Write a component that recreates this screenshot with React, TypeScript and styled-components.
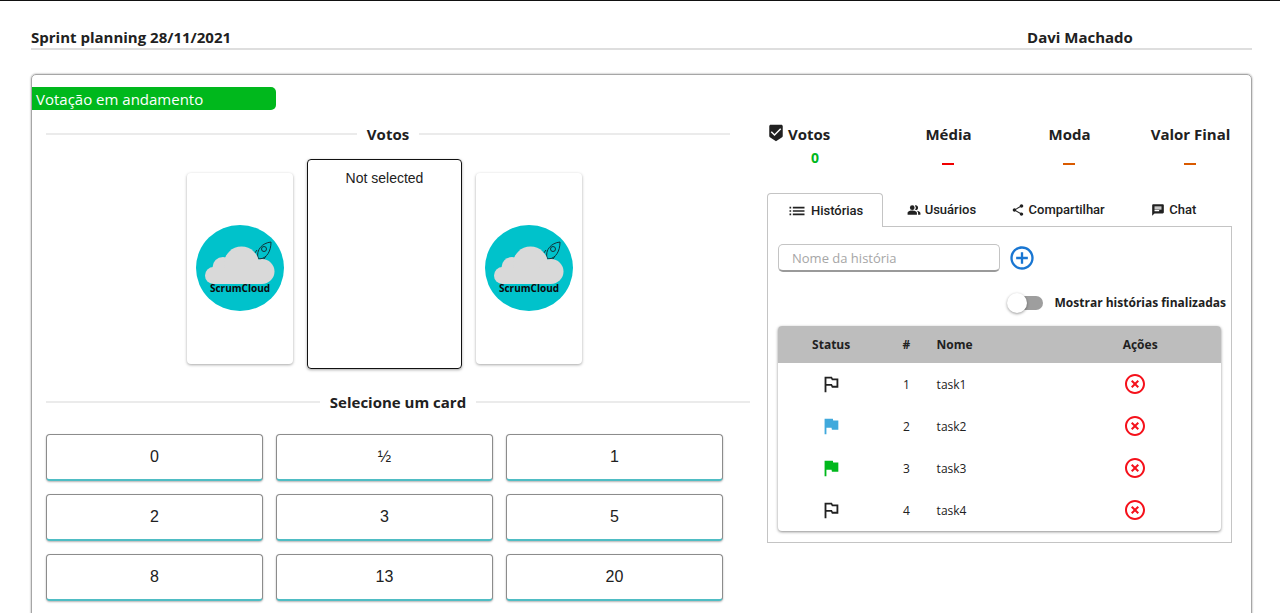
import React, { useState } from "react";
import styled, { createGlobalStyle } from "styled-components";
import {
  MdAddCircleOutline,
  MdBeenhere,
  MdChat,
  MdFlag,
  MdHighlightOff,
  MdList,
  MdOutlinedFlag,
  MdPeopleAlt,
  MdShare,
} from "react-icons/md";

const ui = `"Open Sans", "Noto Sans", sans-serif`;
const plain = `"Liberation Sans", Arial, sans-serif`;
const ink = "#212121";

const GlobalStyle = createGlobalStyle`
  *, *::before, *::after { box-sizing: border-box; }
  body { margin: 0; background: #fff; color: ${ink}; font-family: ${ui}; }
  button, input { font: inherit; color: inherit; }
`;

const Page = styled.div`
  height: 100vh;
  overflow-y: auto;
  scrollbar-width: none;
  border-top: 1px solid #111;
  padding: 25px 28px 0 31px;
`;

const Header = styled.header`
  display: grid;
  grid-template-columns: 1fr 344px;
  height: 24px;
  border-bottom: 2px solid #dedede;
  font-size: 15px;
  line-height: 22px;
`;

const RoomTitle = styled.h1`
  margin: 0;
  font-size: 15px;
  font-weight: 700;
`;

const UserName = styled.strong`
  text-align: center;
`;

const Board = styled.main`
  display: grid;
  grid-template-columns: minmax(0, 1fr) 484px;
  margin-top: 24px;
  padding: 12px 0 40px;
  border: 1px solid #a6a6a6;
  border-radius: 5px;
  box-shadow: 0 0 2px rgba(0, 0, 0, 0.45);
`;

const StatusBar = styled.div`
  grid-column: 1 / -1;
  width: 20%;
  height: 23px;
  padding-left: 4px;
  background: #00b81c;
  border-radius: 0 5px 5px 0;
  color: #fff;
  font-size: 15px;
  line-height: 25px;
`;

const VotingArea = styled.section`
  padding: 11px 0 0 14px;
`;

const SectionTitle = styled.h2<{ $inset: number }>`
  display: flex;
  align-items: center;
  gap: 10px;
  margin: 0 ${(p) => p.$inset}px 0 0;
  font-size: 15px;
  font-weight: 700;
  line-height: 26px;
  &::before,
  &::after {
    content: "";
    flex: 1;
    height: 2px;
    background: #ebebeb;
  }
`;

const VoteCards = styled.div`
  display: flex;
  align-items: center;
  justify-content: center;
  gap: 14px;
  margin: 12px 44px 20px 0;
`;

const LogoCard = styled.div`
  display: grid;
  place-items: center;
  width: 106px;
  height: 191px;
  margin-top: 8px;
  border-radius: 4px;
  background: #fff;
  box-shadow: 0 1px 3px rgba(0, 0, 0, 0.35);
`;

const SelectedCard = styled.div`
  width: 155px;
  height: 210px;
  padding-top: 10px;
  border: 1px solid #111;
  border-radius: 4px;
  box-shadow: 0 1px 3px rgba(0, 0, 0, 0.35);
  font-family: ${plain};
  font-size: 14px;
  line-height: 16px;
  text-align: center;
`;

const Deck = styled.div`
  display: grid;
  grid-template-columns: repeat(3, 1fr);
  gap: 13px;
  margin: 19px 44px 0 0;
`;

const DeckButton = styled.button`
  height: 47px;
  border: 1px solid #8c8c8c;
  border-bottom: 2px solid #4fbdc4;
  border-radius: 4px;
  background: #fff;
  box-shadow: 0 1px 2px rgba(0, 0, 0, 0.3);
  font-family: ${plain};
  font-size: 16px;
  cursor: pointer;
`;

const Side = styled.aside`
  padding-top: 11px;
`;

const Stats = styled.dl`
  display: grid;
  grid-template-columns: repeat(4, 1fr);
  margin: 0;
  font-size: 15px;
  font-weight: 700;
  line-height: 26px;
  text-align: center;
`;

const Stat = styled.div<{ $first?: boolean }>`
  dt {
    display: flex;
    align-items: center;
    justify-content: ${(p) => (p.$first ? "flex-start" : "center")};
    gap: 3px;
  }
  dt svg {
    margin-bottom: 2px;
  }
  dd {
    margin: 0;
    padding-right: ${(p) => (p.$first ? 25 : 2)}px;
  }
`;

const Value = styled.dd<{ $color: string }>`
  color: ${(p) => p.$color};
  font-size: 14px;
  line-height: 22px;
`;

const EmptyValue = styled.span`
  display: inline-block;
  width: 12px;
  height: 2px;
  background: currentColor;
  vertical-align: -2px;
`;

const Tabs = styled.div`
  display: grid;
  grid-template-columns: repeat(4, 1fr);
  margin: 24px 19px 0 0;
`;

const Tab = styled.button<{ $active: boolean }>`
  display: flex;
  align-items: center;
  justify-content: center;
  gap: 4px;
  height: 34px;
  padding: 0;
  border: 0 solid #c4c4c4;
  border-width: ${(p) => (p.$active ? "1px 1px 0" : "0 0 1px")};
  border-radius: ${(p) => (p.$active ? "4px 4px 0 0" : "0")};
  background: #fff;
  font-family: Roboto, sans-serif;
  font-size: 13px;
  font-weight: 500;
  cursor: pointer;
`;

const TabPanel = styled.div`
  margin-right: 19px;
  padding: 17px 10px 11px;
  border: 1px solid #c4c4c4;
  border-top: 0;
`;

const AddStory = styled.form`
  display: flex;
  align-items: center;
  gap: 8px;
`;

const StoryInput = styled.input`
  width: 222px;
  height: 28px;
  padding: 0 13px;
  border: 1px solid #c4c4c4;
  border-bottom: 2px solid #9a9a9a;
  border-radius: 5px;
  background: #fff;
  font-size: 13px;
  &::placeholder {
    color: #a6a6a6;
    opacity: 1;
  }
`;

const IconButton = styled.button<{ $color: string }>`
  display: inline-flex;
  padding: 0;
  border: 0;
  background: none;
  color: ${(p) => p.$color};
  vertical-align: middle;
  cursor: pointer;
`;

const ToggleRow = styled.label`
  display: flex;
  align-items: center;
  justify-content: flex-end;
  gap: 12px;
  margin: 20px -5px 12px 0;
  font-size: 12px;
  font-weight: 700;
  line-height: 22px;
`;

const Switch = styled.input`
  appearance: none;
  display: flex;
  align-items: center;
  width: 34px;
  height: 14px;
  margin: 0;
  border-radius: 7px;
  background: #9e9e9e;
  &::before {
    content: "";
    width: 20px;
    height: 20px;
    flex: none;
    margin-left: -2px;
    border-radius: 50%;
    background: #fff;
    box-shadow: 0 1px 3px rgba(0, 0, 0, 0.4);
  }
  &:checked {
    background: #8ab8ea;
  }
  &:checked::before {
    margin-left: 16px;
    background: #1976d2;
  }
`;

const StoryTable = styled.table`
  width: 100%;
  table-layout: fixed;
  border-spacing: 0;
  border-radius: 4px;
  overflow: hidden;
  box-shadow: 0 1px 3px rgba(0, 0, 0, 0.45);
  font-size: 12px;
  text-align: left;
  th {
    height: 37px;
    padding: 0;
    background: #bdbdbd;
  }
  td {
    height: 42px;
    padding: 0;
  }
  th:nth-child(n + 3),
  td:nth-child(n + 3) {
    padding-left: 8px;
  }
  svg {
    display: block;
  }
`;

const StatusCell = styled.td`
  svg {
    margin: 0 auto;
  }
`;

const CenterHead = styled.th`
  text-align: center;
`;

const NumberCell = styled.td`
  text-align: center;
`;

const ScrumCloudLogo = () => (
  <svg width="88" height="88" viewBox="0 0 88 88" role="img" aria-label="ScrumCloud">
    <ellipse cx="44" cy="44" rx="44" ry="43" fill="#00c2cb" />
    <g fill="none" stroke="#12343a" strokeWidth="1" strokeLinejoin="round">
      <path d="M62 34C60 26 66 19 75 18C75 27 71 34 64 35Z" />
      <circle cx="68" cy="25" r="2.5" />
      <path d="M61 26L58 30L61 33M70 32L68 35L64 35" />
    </g>
    <g fill="#d9d9d9">
      <circle cx="17.5" cy="51.5" r="8.5" />
      <circle cx="27" cy="43.5" r="10.5" />
      <circle cx="45.500" cy="40" r="17.500" />
      <circle cx="66" cy="47.500" r="12.500" />
      <rect x="17" y="44" width="49" height="16" />
    </g>
    <text x="44" y="68" textAnchor="middle" fontFamily="Open Sans, sans-serif" fontSize="10" fontWeight="700" fill="#0b0b0b">
      ScrumCloud
    </text>
  </svg>
);

const cards = ["0", "½", "1", "2", "3", "5", "8", "13", "20"];

const tabs = [
  { name: "Histórias", icon: <MdList size={20} /> },
  { name: "Usuários", icon: <MdPeopleAlt size={14} /> },
  { name: "Compartilhar", icon: <MdShare size={14} /> },
  { name: "Chat", icon: <MdChat size={14} /> },
];

const stories = [
  { id: 1, name: "task1", flag: <MdOutlinedFlag size={22} /> },
  { id: 2, name: "task2", flag: <MdFlag size={22} color="#40a9dc" /> },
  { id: 3, name: "task3", flag: <MdFlag size={22} color="#00b81c" /> },
  { id: 4, name: "task4", flag: <MdOutlinedFlag size={22} /> },
];

export default function App() {
  const [showDone, setShowDone] = useState(false);
  const [active, setActive] = useState(0);

  return (
    <>
      <GlobalStyle />
      <Page>
        <Header>
          <RoomTitle>Sprint planning 28/11/2021</RoomTitle>
          <UserName>Davi Machado</UserName>
        </Header>
        <Board>
          <StatusBar>Votação em andamento</StatusBar>
          <VotingArea>
            <SectionTitle $inset={37}>Votos</SectionTitle>
            <VoteCards>
              <LogoCard>
                <ScrumCloudLogo />
              </LogoCard>
              <SelectedCard>Not selected</SelectedCard>
              <LogoCard>
                <ScrumCloudLogo />
              </LogoCard>
            </VoteCards>
            <SectionTitle $inset={17}>Selecione um card</SectionTitle>
            <Deck>
              {cards.map((c) => (
                <DeckButton key={c} type="button">
                  {c}
                </DeckButton>
              ))}
            </Deck>
          </VotingArea>
          <Side>
            <Stats>
              <Stat $first>
                <dt>
                  <MdBeenhere size={18} />
                  Votos
                </dt>
                <Value $color="#00b81c">0</Value>
              </Stat>
              <Stat>
                <dt>Média</dt>
                <Value $color="#f00000">
                  <EmptyValue />
                </Value>
              </Stat>
              <Stat>
                <dt>Moda</dt>
                <Value $color="#d95a00">
                  <EmptyValue />
                </Value>
              </Stat>
              <Stat>
                <dt>Valor Final</dt>
                <Value $color="#d95a00">
                  <EmptyValue />
                </Value>
              </Stat>
            </Stats>
            <Tabs role="tablist">
              {tabs.map((t, i) => (
                <Tab
                  key={t.name}
                  type="button"
                  role="tab"
                  aria-selected={i === active}
                  $active={i === active}
                  onClick={() => setActive(i)}
                >
                  {t.icon}
                  {t.name}
                </Tab>
              ))}
            </Tabs>
            <TabPanel role="tabpanel">
              <AddStory onSubmit={(e) => e.preventDefault()}>
                <StoryInput aria-label="Nome da história" placeholder="Nome da história" />
                <IconButton $color="#1976d2" aria-label="Adicionar história">
                  <MdAddCircleOutline size={28} />
                </IconButton>
              </AddStory>
              <ToggleRow>
                <Switch
                  type="checkbox"
                  role="switch"
                  checked={showDone}
                  onChange={(e) => setShowDone(e.target.checked)}
                />
                Mostrar histórias finalizadas
              </ToggleRow>
              <StoryTable>
                <colgroup>
                  <col style={{ width: "24%" }} />
                  <col style={{ width: "10%" }} />
                  <col style={{ width: "42%" }} />
                  <col />
                </colgroup>
                <thead>
                  <tr>
                    <CenterHead>Status</CenterHead>
                    <CenterHead>#</CenterHead>
                    <th>Nome</th>
                    <th>Ações</th>
                  </tr>
                </thead>
                <tbody>
                  {stories.map((s) => (
                    <tr key={s.id}>
                      <StatusCell>{s.flag}</StatusCell>
                      <NumberCell>{s.id}</NumberCell>
                      <td>{s.name}</td>
                      <td>
                        <IconButton type="button" $color="#f5111b" aria-label={`Remover ${s.name}`}>
                          <MdHighlightOff size={24} />
                        </IconButton>
                      </td>
                    </tr>
                  ))}
                </tbody>
              </StoryTable>
            </TabPanel>
          </Side>
        </Board>
      </Page>
    </>
  );
}
